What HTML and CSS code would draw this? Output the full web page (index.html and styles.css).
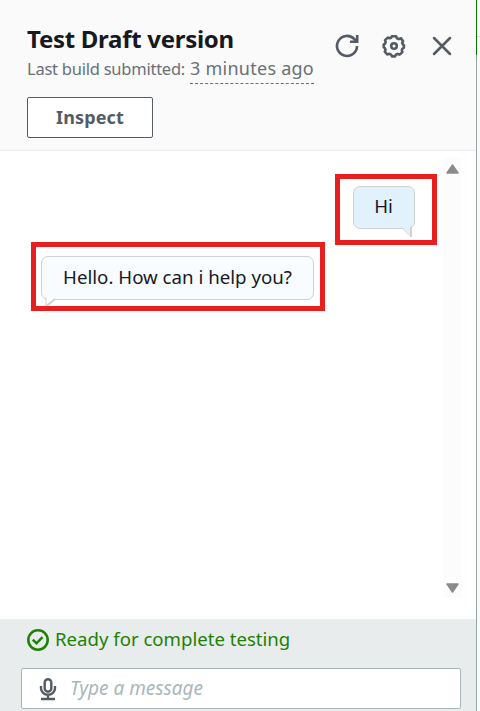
FILE: index.html
```
<!DOCTYPE html>
<html lang="en">
<head>
<meta charset="utf-8">
<title>Test Draft version</title>
<link rel="stylesheet" href="styles.css">
</head>
<body>
<div class="window">
<main class="panel">
  <header class="header">
    <div class="heading">
      <h1><span>Test Draft version</span></h1>
      <p class="build"><span class="build-label">Last build submitted:</span> <span class="build-time">3 minutes ago</span></p>
      <button class="inspect"><span>Inspect</span></button>
    </div>
    <div class="actions">
      <svg width="24" height="24" viewBox="0 0 24 24" fill="none" stroke="#545b64" stroke-width="2.6"><path d="M22 12A10 10 0 1 1 19.4 5.2L22 7.5M22.2 1V7.7H15"/></svg>
      <svg width="24" height="24" viewBox="0 0 24 24" fill="none" stroke="#545b64" stroke-width="2.6" stroke-linejoin="round"><path d="M9.9 2.2h4.2l.8 2 2.1.9 2-.8 2 2.9-.8 2 .7 1.2 1 .8v2.5l-1.6 1.1-.5 1.5.6 1.8-2.8 2.5-2-.7-1.8.8-.8 1.7H10l-.9-1.8-1.9-.8-2 .7-2.4-2.8.7-2-.6-1.5-1.2-.9v-2.7l1.4-1 .6-1.5-.7-2 2.8-2.5 2 .7 1.5-.7z"/><circle cx="12" cy="12" r="2.8"/></svg>
      <svg width="24" height="24" viewBox="0 0 24 24" fill="none" stroke="#545b64" stroke-width="2.5" stroke-linecap="round"><path d="M4 4l16 16M20 4L4 20"/></svg>
    </div>
  </header>
  <section class="chat">
    <div class="messages">
      <div class="highlight sent"><div class="bubble"><span>Hi</span>
        <svg class="tail" width="12" height="11" viewBox="0 0 12 11"><path d="M1 0L10 9V0" fill="#e1f2fd"/><path d="M1 1L10 9.5" stroke="#d0d1d2" fill="none"/><path d="M10 0V10" stroke="#d0d1d2" stroke-width="2"/></svg></div></div>
      <div class="highlight reply"><div class="bubble"><span>Hello. How can i help you?</span>
        <svg class="tail" width="12" height="8" viewBox="0 0 12 8"><path d="M1 0V8L10 0" fill="#fff"/><path d="M1 0V9" stroke="#d0d1d2" fill="none"/><path d="M1.5 8L10 1" stroke="#d0d1d2" stroke-width="2"/></svg></div></div>
    </div>
    <div class="scrollbar">
      <svg width="13" height="10" viewBox="0 0 13 10"><path d="M6.5 1L12 9H1z" fill="#8b8b8b" stroke="#8b8b8b" stroke-width="1.5" stroke-linejoin="round"/></svg>
      <svg width="13" height="10" viewBox="0 0 13 10"><path d="M6.5 9L12 1H1z" fill="#8b8b8b" stroke="#8b8b8b" stroke-width="1.5" stroke-linejoin="round"/></svg>
    </div>
  </section>
  <footer class="footer">
    <div class="status">
      <svg width="22" height="22" viewBox="0 0 22 22" fill="none" stroke="#1d8102" stroke-width="2.5"><circle cx="11" cy="11" r="9.7"/><path d="M5.8 10.7l3.7 3.6 6-6.2"/></svg>
      <span>Ready for complete testing</span>
    </div>
    <div class="composer">
      <svg width="18" height="24" viewBox="0 0 18 24" fill="none" stroke="#545b64" stroke-width="2.4"><rect x="5.7" y="2.2" width="6.6" height="12.5" rx="3.3"/><path d="M2 9v2.2a7 6.5 0 0 0 14 0V9M9 17.5V22M2 22h14"/></svg>
      <span>Type a message</span>
    </div>
  </footer>
</main>
<aside class="edge"></aside>
</div>
</body>
</html>
```
FILE: styles.css
```
* { box-sizing: border-box; }
body { margin: 0; background: #fff; font-family: "Noto Sans", sans-serif; color: #16191f; }
.window { display: flex; width: 480px; height: 711px; overflow: hidden; }
.panel { width: 476px; height: 711px; display: flex; flex-direction: column; }
.edge { width: 4px; background: linear-gradient(#d5dbdb, #d5dbdb) 1px 36px / 3px 1px no-repeat, linear-gradient(#087600 55px, #95a5a6 55px) 0 0 / 1px 100% no-repeat, #fafafa; }
.header { height: 151px; background: #fafafa; border-bottom: 1px solid #eaeded; display: flex; justify-content: space-between; padding: 23px 22px 0 27px; }
h1 { margin: 0 0 1px; font-size: 24px; line-height: 32px; font-weight: 700; white-space: nowrap; letter-spacing: -.28px; }
.build { margin: 0; height: 28px; display: flex; gap: 5px; align-items: flex-start; color: #687078; white-space: nowrap; }
.build-label { font-size: 16.5px; line-height: 26px; letter-spacing: -.24px; }
.build-time { font-size: 18px; line-height: 25px; height: 28px; letter-spacing: .25px; border-bottom: 1px dashed #687078; }
.inspect { display: block; margin-top: 13px; width: 126px; height: 41px; padding: 0; background: #fff; border: 1px solid #545b64; border-radius: 2px; color: #545b64; font: 700 18px/39px "Noto Sans", sans-serif; letter-spacing: .15px; }
.inspect span { display: block; height: 39px; }
.actions { display: flex; gap: 23px; padding-top: 11px; height: 35px; }
.actions svg:last-child { margin-left: 1px; }
.chat { height: 468px; display: flex; justify-content: space-between; padding: 7px 14px 21px 31px; }
.messages { width: 406px; padding-top: 16px; display: flex; flex-direction: column; }
.highlight { border: 5px solid #e81f1f; }
.sent { align-self: flex-end; width: 102px; height: 71px; padding: 7px 12.5px; }
.reply { margin-top: -3px; width: 294px; height: 69px; padding: 9px 5px; }
.bubble { position: relative; height: 44px; border: 1px solid #d0d1d2; border-radius: 7px; font-size: 18.7px; line-height: 40px; text-align: center; white-space: nowrap; }
.sent .bubble { width: 62px; height: 43px; line-height: 37px; background: #e1f2fd; }
.reply .bubble { width: 273px; background: #f8fcff; }
.tail { position: absolute; top: 41px; }
.sent .tail { right: 1px; top: 40px; }
.reply .tail { left: 3px; }
.scrollbar { width: 19px; background: #fcfcfc; display: flex; flex-direction: column; align-items: center; justify-content: space-between; padding: 6px 0 5px; }
.footer { height: 92px; background: #e8ecec; padding: 10px 15px 0 21px; }
.status { display: flex; align-items: center; gap: 6px; height: 22px; padding-left: 6px; color: #1d8102; font-size: 18.6px; white-space: nowrap; }
.status span { line-height: 24px; padding-bottom: 2px; }
.composer { margin-top: 17px; height: 41px; border: 1px solid #aab7b8; border-radius: 2px; background: #fff; display: flex; align-items: center; gap: 13px; padding-left: 17px; color: #aab7b8; font-size: 19px; line-height: 26px; font-style: italic; }
.composer span { padding-bottom: 2px; }
```
